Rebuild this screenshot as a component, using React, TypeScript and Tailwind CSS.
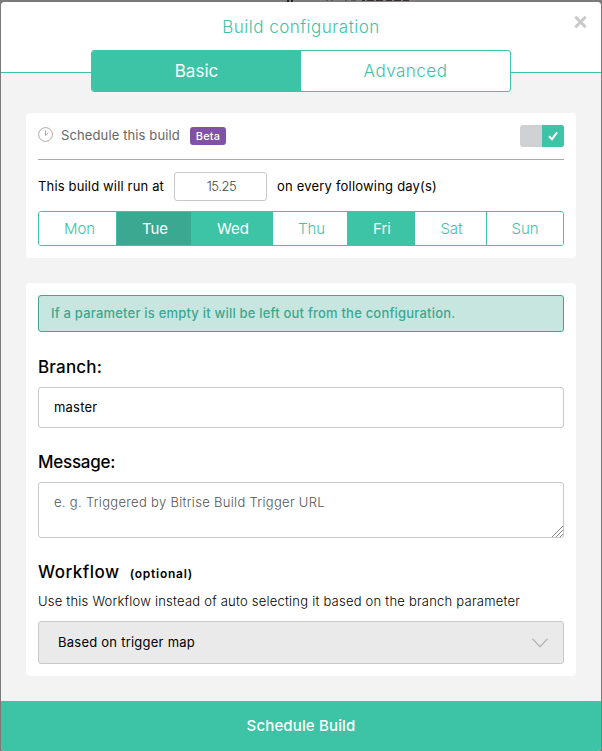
import type { ReactNode } from "react";

const days = [
  { name: "Mon", box: "w-[77px] pl-1 bg-white text-[#3dc3a5] font-light" },
  { name: "Tue", box: "w-[75px] pl-[2px] bg-[#3ba891] text-white border-l border-[#3dc3a5]" },
  { name: "Wed", box: "w-[82px] pl-[2px] bg-[#3dc3a5] text-white" },
  { name: "Thu", box: "w-[74px] pl-[3px] bg-white text-[#3dc3a5] font-light" },
  { name: "Fri", box: "w-[68px] pl-[2px] bg-[#3dc3a5] text-white" },
  { name: "Sat", box: "w-[71px] pl-[2px] bg-white text-[#3dc3a5] font-light" },
  { name: "Sun", box: "flex-1 bg-white text-[#3dc3a5] font-light border-l border-[#3dc3a5]" },
];

function Heading({ className, children }: { className: string; children: ReactNode }) {
  return <h2 className={`text-[17px] leading-6 font-medium text-black ${className}`}>{children}</h2>;
}

function Backdrop() {
  return (
    <svg className="block h-[2px] w-full" viewBox="0 0 602 2" shapeRendering="crispEdges">
      <path d="M287 1h2M292 0v2" stroke="#222" strokeWidth="1.5" />
      <path d="M326 0h2M331 0h2M345 0h2M351 0h5" stroke="#555" />
      <path d="M362 0.5h3M367 0.5h7M376 0.5h7M386 0.5h6M394 0.5h7M403 0.5h6" stroke="#332f31" />
    </svg>
  );
}

export default function App() {
  return (
    <div className="flex h-[751px] w-[602px] flex-col bg-[#7d7a7c] font-['Inter',sans-serif]">
      <Backdrop />
      <div className="mx-px flex flex-1 flex-col overflow-hidden rounded-[4px] bg-[#f3f3f3] text-[13px]">
        <header className="relative flex h-12 shrink-0 items-center justify-center bg-white">
          <h1 className="pt-[4px] text-[17px] font-light tracking-[0.48px] text-[#3dc3a5]">Build configuration</h1>
          <button aria-label="Close" className="absolute top-[14px] right-[14px]">
            <svg className="block h-[12px] w-[13px]" viewBox="0 0 13 12" fill="none" stroke="#c9c9c9" strokeWidth="3">
              <path d="M1.3 0.8 11.7 11.2M11.7 0.8 1.3 11.2" />
            </svg>
          </button>
        </header>
        <nav className="flex h-[42px] shrink-0 items-start">
          <div className="h-[23px] w-[90px] border-b border-[#3dc3a5] bg-white" />
          <div className="h-[23px] w-[420px] bg-white">
            <div className="flex h-[42px] overflow-hidden rounded-[3px] border border-[#3dc3a5] bg-white text-[17px]">
              <button className="w-[209px] bg-[#3dc3a5] pt-[2px] text-white">Basic</button>
              <button className="flex-1 pt-[2px] font-light tracking-[0.5px] text-[#3dc3a5]">Advanced</button>
            </div>
          </div>
          <div className="h-[23px] flex-1 border-b border-[#3dc3a5] bg-white" />
        </nav>

        <section className="mx-[25px] mt-[21px] h-[145px] shrink-0 rounded-[4px] bg-white px-3">
          <div className="flex h-[47px] items-center border-b border-[#a9a9a9]">
            <svg className="mt-[-3px] h-4 w-4" viewBox="0 0 16 16" fill="none" stroke="#aaa">
              <circle cx="7.5" cy="7.5" r="6.9" />
              <path d="M7.5 3.3v5.2l2.7-2.5" />
            </svg>
            <span className="ml-[7px] w-[119px] whitespace-nowrap text-[13px] tracking-[0.12px] text-[#666]">Schedule this build</span>
            <span className="ml-[10px] flex h-[18px] w-9 items-center justify-center rounded-[3px] bg-[#8051a5] text-[11px] font-medium tracking-[0.2px] text-white">Beta</span>
            <button aria-label="Schedule enabled" className="ml-auto flex h-[22px] w-11 overflow-hidden rounded-[3px] bg-[#d0d1d3]">
              <span className="ml-auto flex h-[22px] w-[22px] items-center justify-center bg-[#3dc3a5]">
                <svg className="h-[10px] w-[10px]" viewBox="0 0 10 10" fill="none" stroke="white" strokeWidth="2">
                  <path d="m1 5.2 3 3L9 1.3" />
                </svg>
              </span>
            </button>
          </div>
          <div className="mt-3 flex h-[29px] items-center text-black">
            <span className="w-[126px] whitespace-nowrap tracking-[0.16px]">This build will run at</span>
            <span className="ml-[10px] flex h-[29px] w-[93px] items-center justify-center rounded-[3px] border border-[#c9c9c9] pl-[2px] font-light tracking-[-0.45px] text-[#444]">15.25</span>
            <span className="ml-[10px] whitespace-nowrap tracking-[0.2px]">on every following day(s)</span>
          </div>
          <div className="mt-[10px] flex h-[35px] overflow-hidden rounded-[3px] border border-[#3dc3a5] text-[15px]">
            {days.map((day) => (
              <button key={day.name} className={`${day.box} pt-px`}>{day.name}</button>
            ))}
          </div>
        </section>

        <section className="mx-[25px] mt-[25px] h-[393px] shrink-0 rounded-[4px] bg-white px-3 pt-3">
          <div className="flex h-[37px] items-center rounded-[3px] border border-[#3ba891] bg-[#c8e6e0] pl-3 text-[13px] font-medium tracking-[0.2px] text-[#3ba891]">
            If a parameter is empty it will be left out from the configuration.
          </div>
          <div className="mt-[23px]"><Heading className="tracking-[0.2px]">Branch:</Heading></div>
          <div className="mt-2 flex h-[41px] items-center rounded-[3px] border border-[#c9c9c9] pl-[15px] tracking-[0.2px] text-black">master</div>
          <div className="mt-[22px]"><Heading className="tracking-[-0.25px]">Message:</Heading></div>
          <div className="mt-2 flex h-14 items-start rounded-[3px] border border-[#c9c9c9] pt-[10px] pl-[15px] font-light text-[#555]">
            <span className="tracking-[0.31px]">e. g. Triggered by Bitrise Build Trigger URL</span>
            <svg className="mt-[33px] ml-auto h-[11px] w-[11px]" viewBox="0 0 11 11" stroke="#888">
              <path d="M0 11 11 0M4 11l7-7M8 11l3-3" />
            </svg>
          </div>
          <div className="mt-[22px] flex items-baseline">
            <Heading className="tracking-[0.5px]">Workflow</Heading>
            <span className="ml-[10px] text-[12px] font-semibold tracking-[0.75px] text-black">(optional)</span>
          </div>
          <p className="mt-[7px] h-5 leading-5 tracking-[0.225px] whitespace-nowrap font-light text-black">Use this Workflow instead of auto selecting it based on the branch parameter</p>
          <div className="mt-[10px] flex h-[43px] items-center justify-between rounded-[3px] border border-[#c9c9c9] bg-[#eaeaea] pr-[15px] pl-[19px] text-black">
            <span className="tracking-[0.24px]">Based on trigger map</span>
            <svg className="h-[10px] w-4" viewBox="0 0 16 10" fill="none" stroke="#b5b5b5" strokeWidth="1.3">
              <path d="m0.5 0.7 7.5 8 7.5-8" />
            </svg>
          </div>
        </section>
        <button className="mt-auto h-[50px] shrink-0 bg-[#3dc3a5] pt-px text-[15px] font-medium tracking-[0.15px] text-white">Schedule Build</button>
      </div>
    </div>
  );
}
